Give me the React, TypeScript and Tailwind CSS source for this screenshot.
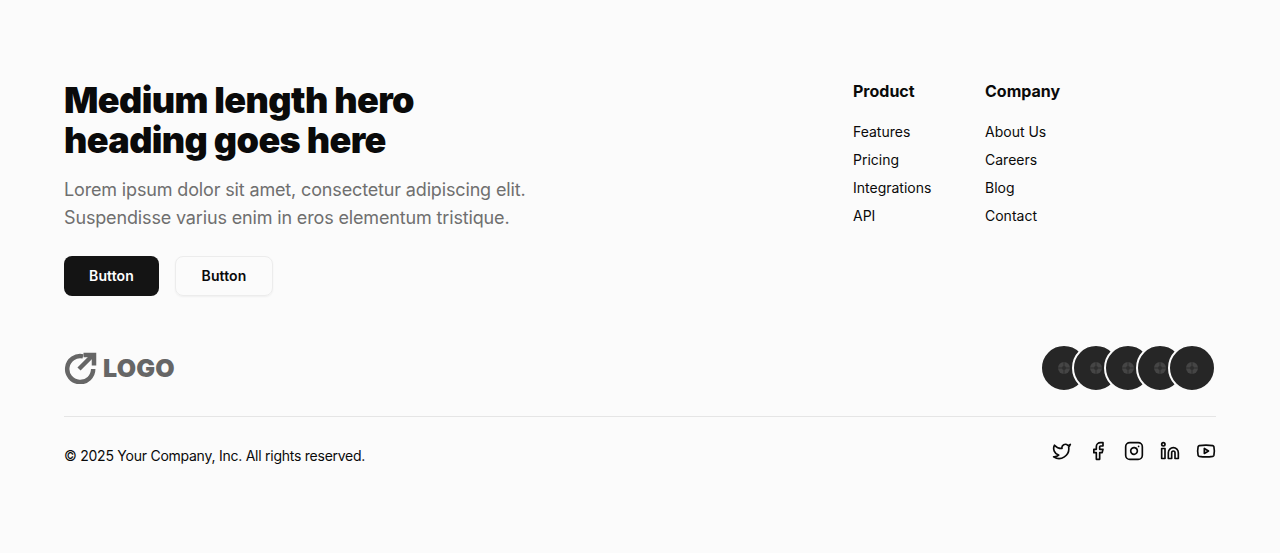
import { Facebook, Instagram, Linkedin, Twitter, Youtube } from 'lucide-react'

const columns = [
  { title: 'Product', width: 'w-[132px]', links: ['Features', 'Pricing', 'Integrations', 'API'] },
  { title: 'Company', width: 'w-[231px]', links: ['About Us', 'Careers', 'Blog', 'Contact'] },
]

const socials = [Twitter, Facebook, Instagram, Linkedin, Youtube]

function Logo() {
  return (
    <div className="flex items-center gap-[5px] text-[#666666]">
      <svg width="34" height="32" viewBox="0 0 34 32" fill="none" stroke="currentColor" strokeWidth="4.5">
        <path d="M19 4.4A13 13 0 1 0 29.2 17" />
        <path d="M15 17 29 3" />
        <path d="M19.5 3H30V13.5" />
      </svg>
      <span className="text-[25px] leading-8 font-black tracking-[0.2px]">LOGO</span>
    </div>
  )
}

function AvatarGlyph() {
  return (
    <svg width="14" height="14" viewBox="0 0 14 14" fill="none">
      <circle cx="7" cy="7" r="6" fill="#454545" />
      <circle cx="7" cy="7" r="2" fill="#2e2e2e" />
      <path d="M7 1v4M13 7H9M7 13V9M1 7h4" stroke="#2e2e2e" strokeWidth="1" />
    </svg>
  )
}

export default function App() {
  return (
    <div className="min-h-[553px] bg-[#fbfbfb] px-16 pt-20 font-['Inter',sans-serif] text-[#0a0a0a]">
      <div className="flex">
        <div className="w-[789px]">
          <h1 className="text-4xl font-black tracking-[-0.62px]">
            Medium length hero
            <br />
            heading goes here
          </h1>
          <p className="mt-4 text-lg leading-7 tracking-[-0.15px] text-[#6f6f6f]">
            Lorem ipsum dolor sit amet, consectetur adipiscing elit.
            <br />
            Suspendisse varius enim in eros elementum tristique.
          </p>
          <div className="mt-6 flex gap-4">
            <button className="h-10 w-[95px] rounded-lg bg-[#141414] text-sm font-semibold tracking-[0.1px] text-white">
              Button
            </button>
            <button className="h-10 w-[98px] rounded-lg border border-[#ececec] text-sm font-semibold tracking-[0.1px] shadow-xs">
              Button
            </button>
          </div>
        </div>
        <div className="flex">
          {columns.map((col) => (
            <div key={col.title} className={col.width}>
              <h2 className="-mt-px text-base leading-6 font-bold">{col.title}</h2>
              <ul className="mt-[19px] flex flex-col gap-2">
                {col.links.map((link) => (
                  <li key={link} className="text-sm leading-5">
                    {link}
                  </li>
                ))}
              </ul>
            </div>
          ))}
        </div>
      </div>

      <div className="mt-12 flex items-center justify-between pb-6">
        <Logo />
        <div className="flex">
          {[0, 1, 2, 3, 4].map((i) => (
            <div
              key={i}
              className="-ml-4 flex h-12 w-12 items-center justify-center rounded-full border-2 border-[#fbfbfb] bg-[#262626] first:ml-0"
            >
              <AvatarGlyph />
            </div>
          ))}
        </div>
      </div>

      <div className="flex items-start justify-between border-t border-[#e5e5e5] pt-6">
        <p className="mt-[5px] text-sm leading-5 tracking-[-0.25px]">© 2025 Your Company, Inc. All rights reserved.</p>
        <div className="flex gap-4">
          {socials.map((Icon, i) => (
            <Icon key={i} size={20} strokeWidth={2} />
          ))}
        </div>
      </div>
    </div>
  )
}
